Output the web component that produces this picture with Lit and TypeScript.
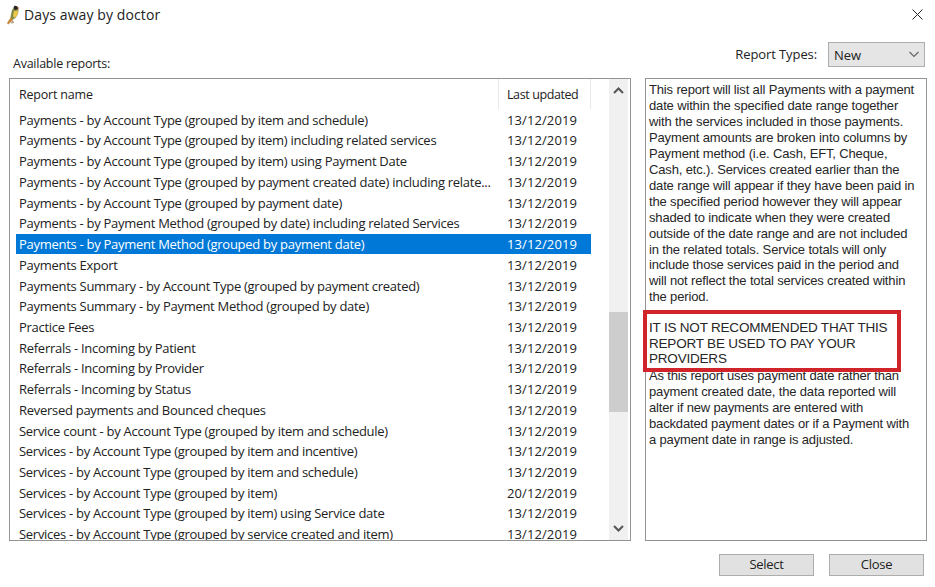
import { LitElement, html, css } from "lit";
import { customElement } from "lit/decorators.js";

const D = "13/12/2019";
const ROWS: [string, string][] = [
  ["Payments - by Account Type (grouped by item and schedule)", D],
  ["Payments - by Account Type (grouped by item) including related services", D],
  ["Payments - by Account Type (grouped by item) using Payment Date", D],
  ["Payments - by Account Type (grouped by payment created date) including relate...", D],
  ["Payments - by Account Type (grouped by payment date)", D],
  ["Payments - by Payment Method (grouped by date) including related Services", D],
  ["Payments - by Payment Method (grouped by payment date)", D],
  ["Payments Export", D],
  ["Payments Summary - by Account Type (grouped by payment created)", D],
  ["Payments Summary - by Payment Method (grouped by date)", D],
  ["Practice Fees", D],
  ["Referrals - Incoming by Patient", D],
  ["Referrals - Incoming by Provider", D],
  ["Referrals - Incoming by Status", D],
  ["Reversed payments and Bounced cheques", D],
  ["Service count - by Account Type (grouped by item and schedule)", D],
  ["Services - by Account Type (grouped by item and incentive)", D],
  ["Services - by Account Type (grouped by item and schedule)", D],
  ["Services - by Account Type (grouped by item)", "20/12/2019"],
  ["Services - by Account Type (grouped by item) using Service date", D],
  ["Services - by Account Type (grouped by service created and item)", D],
];

const TOP = [
  "This report will list all Payments with a payment",
  "date within the specified date range together",
  "with the services included in those payments.",
  "Payment amounts are broken into columns by",
  "Payment method (i.e. Cash, EFT, Cheque,",
  "Cash, etc.). Services created earlier than the",
  "date range will appear if they have been paid in",
  "the specified period however they will appear",
  "shaded to indicate when they were created",
  "outside of the date range and are not included",
  "in the related totals. Service totals will only",
  "include those services paid in the period and",
  "will not reflect the total services created within",
  "the period.",
];
const WARN = ["IT IS NOT RECOMMENDED THAT THIS", "REPORT BE USED TO PAY YOUR", "PROVIDERS"];
const BOTTOM = [
  "As this report uses payment date rather than",
  "payment created date, the data reported will",
  "alter if new payments are entered with",
  "backdated payment dates or if a Payment with",
  "a payment date in range is adjusted.",
];

@customElement("app-root")
export class AppRoot extends LitElement {
  static styles = css`
    :host {
      display: block;
      width: 935px;
      height: 587px;
      background: #fff;
      color: #222;
      font-family: "Open Sans", "Noto Sans", sans-serif;
      overflow: hidden;
    }
    .title {
      display: flex;
      align-items: center;
      height: 30px;
      padding: 0 12px 0 6px;
      gap: 4px;
      font-size: 14px;
    }
    .title .name { flex: 1; letter-spacing: 0.1px; padding-bottom: 2px; }
    .close { margin-bottom: 2px; }
    .top {
      display: flex;
      justify-content: space-between;
      align-items: flex-end;
      height: 48px;
      padding: 0 10px 0 13px;
    }
    .avail { padding-bottom: 6px; font-size: 12.5px; letter-spacing: -0.25px; }
    .types { display: flex; align-items: center; gap: 11px; padding-bottom: 11px; font-size: 13px; letter-spacing: -0.1px; }
    .types .label { padding-bottom: 2px; }
    .select {
      width: 97px;
      height: 25px;
      box-sizing: border-box;
      background: #e5e5e5;
      border: 1px solid #adadad;
      display: flex;
      align-items: center;
      justify-content: space-between;
      padding: 0 4px 0 5px;
      font-size: 13px;
    }
    .main { display: flex; gap: 14px; padding-left: 9px; }
    .list {
      width: 622px;
      height: 463px;
      box-sizing: border-box;
      border: 1px solid #939393;
      display: flex;
      overflow: hidden;
    }
    .table { width: 581px; padding-left: 6px; box-sizing: border-box; font-size: 13px; letter-spacing: -0.28px; }
    .head { display: flex; height: 30.4px; align-items: center; padding-left: 3px; font-size: 12.5px; letter-spacing: -0.2px; }
    .row { display: flex; height: 20.72px; align-items: center; padding-left: 3px; white-space: nowrap; }
    .c1 { width: 488px; overflow: hidden; }
    .head .c1 { height: 100%; display: flex; align-items: center; border-right: 1px solid #e8e8e8; box-sizing: border-box; width: 480px; margin-right: 8px; }
    .head .c2 { height: 100%; display: flex; align-items: center; border-right: 1px solid #e8e8e8; box-sizing: border-box; width: 84px; letter-spacing: -0.4px; font-size: 12.5px; }
    .c2 { letter-spacing: 0.1px; }
    .row.sel { background: #0078d7; color: #fff; }
    .scroll {
      margin-left: 18px;
      width: 19px;
      background: #f0f0f0;
      position: relative;
      flex: none;
    }
    .arrow { position: absolute; left: 4px; }
    .arrow.up { top: 8px; }
    .arrow.down { bottom: 8px; }
    .thumb { position: absolute; left: 0; top: 233px; width: 100%; height: 100px; background: #cdcdcd; }
    .panel {
      width: 282px;
      height: 463px;
      box-sizing: border-box;
      border: 1px solid #939393;
      padding: 3px 0 0 3px;
      position: relative;
      font-family: "Liberation Sans", Arial, sans-serif;
      font-size: 13px;
      letter-spacing: -0.15px;
      line-height: 15.95px;
      color: #262626;
      white-space: nowrap;
    }
    .warn {
      position: absolute;
      left: -3px;
      top: 231px;
      width: 258px;
      height: 62px;
      box-sizing: border-box;
      border: 4px solid #d1232a;
      background: #fff;
      padding: 6px 0 0 2px;
      font-size: 13.5px;
      letter-spacing: -0.2px;
      line-height: 15.7px;
    }
    .bottom { padding-top: 63px; }
    .buttons {
      display: flex;
      justify-content: flex-end;
      gap: 15px;
      padding: 13px 11px 0 0;
    }
    .btn {
      width: 95px;
      height: 22px;
      box-sizing: border-box;
      background: #e1e1e1;
      border: 1px solid #adadad;
      display: flex;
      align-items: center;
      justify-content: center;
      padding-bottom: 2px;
      font-size: 13px;
      letter-spacing: -0.3px;
    }
  `;

  render() {
    return html`
      <div class="title">
        <svg width="14" height="20" viewBox="0 0 14 20">
          <path d="M9 1 L11.5 2 L12.5 5 L12 9 L9.5 13 L6 15 L4.5 12 L6 5 Z" fill="#7f8a45" />
          <path d="M8.5 0.5 L11.5 1.5 L12 4 L9 5 L7.5 3 Z" fill="#2a2420" />
          <path d="M11.5 2 L13.5 3 L11.8 4 Z" fill="#d8572c" />
          <path d="M8 6 L12 5.5 L11.5 10 L8.5 13 L7 11 Z" fill="#eac94e" />
          <path d="M5 12 L1 18 L2.2 19.5 L7 15 Z" fill="#c4883a" />
          <path d="M7 15 L8 18 L4.5 18.5 Z" fill="#a9987c" />
        </svg>
        <span class="name">Days away by doctor</span>
        <svg class="close" width="11" height="11" viewBox="0 0 11 11">
          <path d="M0.5 0.5 L10.5 10.5 M10.5 0.5 L0.5 10.5" stroke="#222" stroke-width="1" fill="none" />
        </svg>
      </div>
      <div class="top">
        <span class="avail">Available reports:</span>
        <div class="types">
          <span class="label">Report Types:</span>
          <div class="select">
            <span>New</span>
            <svg width="12" height="7" viewBox="0 0 12 7">
              <path d="M1.5 1 L6 5.5 L10.5 1" stroke="#666" stroke-width="1.2" fill="none" />
            </svg>
          </div>
        </div>
      </div>
      <div class="main">
        <div class="list">
          <div class="table">
            <div class="head"><span class="c1">Report name</span><span class="c2">Last updated</span></div>
            ${ROWS.map(
              ([n, d], i) => html`<div class="row ${i === 6 ? "sel" : ""}"><span class="c1">${n}</span><span class="c2">${d}</span></div>`
            )}
          </div>
          <div class="scroll">
            <svg class="arrow up" width="11" height="7" viewBox="0 0 11 7">
              <path d="M1 6 L5.5 1.5 L10 6" stroke="#555" stroke-width="2" fill="none" />
            </svg>
            <div class="thumb"></div>
            <svg class="arrow down" width="11" height="7" viewBox="0 0 11 7">
              <path d="M1 1 L5.5 5.5 L10 1" stroke="#555" stroke-width="2" fill="none" />
            </svg>
          </div>
        </div>
        <div class="panel">
          ${TOP.map((l) => html`<div>${l}</div>`)}
          <div class="warn">${WARN.map((l) => html`<div>${l}</div>`)}</div>
          <div class="bottom">
            ${BOTTOM.map((l) => html`<div>${l}</div>`)}
          </div>
        </div>
      </div>
      <div class="buttons">
        <div class="btn">Select</div>
        <div class="btn">Close</div>
      </div>
    `;
  }
}
